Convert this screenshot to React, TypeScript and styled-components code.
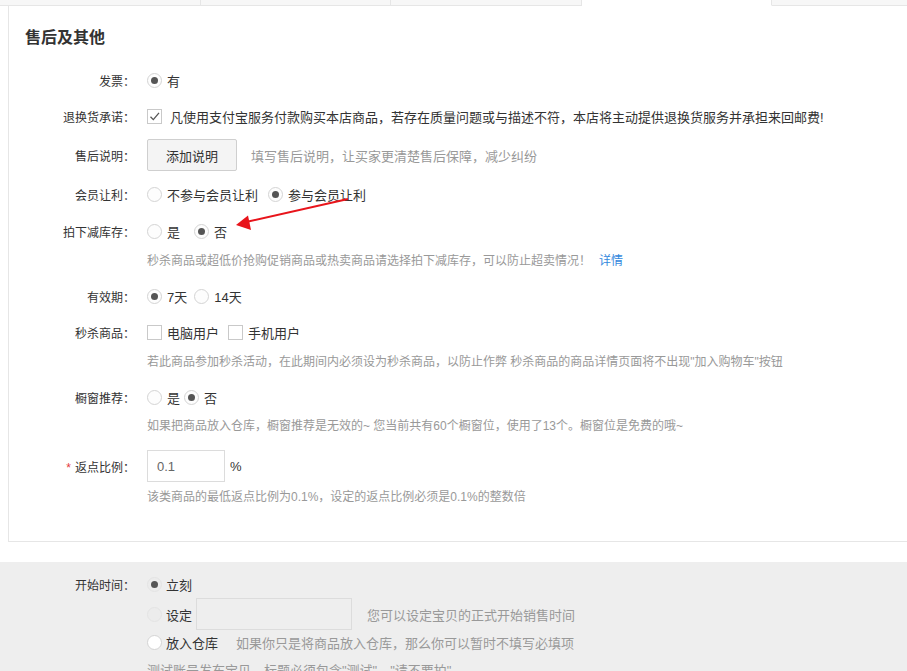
import React from "react";
import styled, { createGlobalStyle } from "styled-components";

const GlobalStyle = createGlobalStyle`
  html, body { margin: 0; padding: 0; background: #fff; overflow: hidden; }
  body {
    font-family: "Liberation Sans", "Noto Sans CJK SC", sans-serif;
    color: #333;
    font-size: 12px;
  }
  * { box-sizing: border-box; }
`;

const Page = styled.div`
  position: relative;
  width: 907px;
  height: 720px;
  overflow: hidden;
`;

const TabBar = styled.div`
  display: flex;
  height: 6px;
`;

const Tab = styled.div<{ $w?: number; $active?: boolean; $last?: boolean }>`
  flex: ${(p) => (p.$w ? `0 0 ${p.$w}px` : "1 1 auto")};
  height: 6px;
  background: ${(p) => (p.$active ? "#fff" : "#f7f7f7")};
  border-bottom: 1px solid ${(p) => (p.$active ? "#fff" : "#e6e6e6")};
  border-right: ${(p) => (p.$last ? "none" : "1px solid #e6e6e6")};
`;

const Panel = styled.section`
  margin-left: 8px;
  border-left: 1px solid #e6e6e6;
  border-bottom: 1px solid #e6e6e6;
  padding-bottom: 34px;
`;

const Title = styled.h2`
  margin: 0;
  padding: 22px 0 0 16px;
  font-size: 16px;
  line-height: 20px;
  font-weight: bold;
  color: #333;
`;

const Field = styled.div<{ $mt: number }>`
  margin-top: ${(p) => p.$mt}px;
`;

const Row = styled.div<{ $h?: number }>`
  display: flex;
  align-items: center;
  height: ${(p) => p.$h ?? 30}px;
`;

const Label = styled.div`
  flex: 0 0 126px;
  margin-right: 12px;
  text-align: right;
  font-size: 12px;
  color: #333;
  white-space: nowrap;
`;

const Star = styled.span`
  color: #e4393c;
  margin-right: 4px;
`;

const Help = styled.div<{ $mt?: number }>`
  margin: ${(p) => p.$mt ?? 5}px 0 0 138px;
  line-height: 20px;
  font-size: 12px;
  color: #999;
  white-space: nowrap;
`;

const Link = styled.a`
  color: #3388dd;
  text-decoration: none;
  margin-left: 8px;
`;

const Option = styled.label<{ $mr?: number }>`
  display: inline-flex;
  align-items: center;
  margin-right: ${(p) => p.$mr ?? 0}px;
  white-space: nowrap;
`;

const OptionText = styled.span<{ $ml?: number }>`
  margin-left: ${(p) => p.$ml ?? 5}px;
  font-size: 13px;
  color: #333;
`;

const Radio = styled.span<{ $checked?: boolean; $variant?: "normal" | "dim" | "white" }>`
  width: 15px;
  height: 15px;
  border-radius: 50%;
  border: 1px solid ${(p) => (p.$variant === "dim" ? "#e4e4e4" : "#d4d4d4")};
  background: ${(p) =>
    p.$variant === "dim" ? "#ececec" : p.$variant === "white" ? "#fff" : "#fdfdfd"};
  display: inline-flex;
  align-items: center;
  justify-content: center;
  flex-shrink: 0;
  &::after {
    content: "";
    width: 7px;
    height: 7px;
    border-radius: 50%;
    background: #555;
    display: ${(p) => (p.$checked ? "block" : "none")};
  }
`;

const Box = styled.span`
  width: 15px;
  height: 15px;
  border: 1px solid #c9c9c9;
  background: #fff;
  display: inline-flex;
  align-items: center;
  justify-content: center;
  flex-shrink: 0;
`;

const Button = styled.button`
  width: 90px;
  height: 32px;
  border: 1px solid #cfcfcf;
  border-radius: 2px;
  background: #f4f4f4;
  font-family: inherit;
  font-size: 13px;
  color: #333;
  padding: 0;
`;

const Hint = styled.span<{ $ml?: number }>`
  margin-left: ${(p) => p.$ml ?? 14}px;
  font-size: 13px;
  color: #999;
  white-space: nowrap;
`;

const TextInput = styled.input<{ $w: number; $bg?: string; $ml?: number }>`
  width: ${(p) => p.$w}px;
  height: 32px;
  margin-left: ${(p) => p.$ml ?? 0}px;
  border: 1px solid #dcdcdc;
  background: ${(p) => p.$bg ?? "#fff"};
  padding: 0 0 0 9px;
  font-family: inherit;
  font-size: 13px;
  color: #666;
  outline: none;
`;

const Unit = styled.span`
  margin-left: 5px;
  font-size: 13px;
  color: #333;
`;

const Bottom = styled.section`
  margin-top: 20px;
  background: #eee;
  padding: 8px 0 60px 9px;
`;

const LastLine = styled.div`
  margin: 5px 0 0 138px;
  line-height: 24px;
  font-size: 13px;
  color: #999;
  white-space: nowrap;
`;

const Arrow = styled.svg`
  position: absolute;
  left: 0;
  top: 0;
  pointer-events: none;
`;

const Check = () => (
  <svg width="13" height="13" viewBox="0 0 13 13">
    <path d="M2.5 6.8 L5.3 9.6 L11 2.8" fill="none" stroke="#555" strokeWidth="1.3" />
  </svg>
);

export default function App() {
  return (
    <Page>
      <GlobalStyle />
      <TabBar>
        <Tab $w={201} />
        <Tab $w={190} />
        <Tab $w={191} />
        <Tab $w={190} $active />
        <Tab $last />
      </TabBar>
      <Panel>
        <Title>售后及其他</Title>

        <Field $mt={17}>
          <Row>
            <Label>发票：</Label>
            <Option>
              <Radio $checked />
              <OptionText>有</OptionText>
            </Option>
          </Row>
        </Field>

        <Field $mt={6}>
          <Row>
            <Label>退换货承诺：</Label>
            <Option>
              <Box>
                <Check />
              </Box>
              <OptionText $ml={8}>
                凡使用支付宝服务付款购买本店商品，若存在质量问题或与描述不符，本店将主动提供退换货服务并承担来回邮费!
              </OptionText>
            </Option>
          </Row>
        </Field>

        <Field $mt={8}>
          <Row $h={32}>
            <Label>售后说明：</Label>
            <Button>添加说明</Button>
            <Hint>填写售后说明，让买家更清楚售后保障，减少纠纷</Hint>
          </Row>
        </Field>

        <Field $mt={8}>
          <Row>
            <Label>会员让利：</Label>
            <Option $mr={10}>
              <Radio />
              <OptionText>不参与会员让利</OptionText>
            </Option>
            <Option>
              <Radio $checked />
              <OptionText>参与会员让利</OptionText>
            </Option>
          </Row>
        </Field>

        <Field $mt={7}>
          <Row>
            <Label>拍下减库存：</Label>
            <Option $mr={14}>
              <Radio />
              <OptionText>是</OptionText>
            </Option>
            <Option>
              <Radio $checked />
              <OptionText>否</OptionText>
            </Option>
          </Row>
          <Help>
            秒杀商品或超低价抢购促销商品或热卖商品请选择拍下减库存，可以防止超卖情况！
            <Link href="#">详情</Link>
          </Help>
        </Field>

        <Field $mt={10}>
          <Row>
            <Label>有效期：</Label>
            <Option $mr={7}>
              <Radio $checked />
              <OptionText>7天</OptionText>
            </Option>
            <Option>
              <Radio />
              <OptionText>14天</OptionText>
            </Option>
          </Row>
        </Field>

        <Field $mt={6}>
          <Row>
            <Label>秒杀商品：</Label>
            <Option $mr={9}>
              <Box />
              <OptionText>电脑用户</OptionText>
            </Option>
            <Option>
              <Box />
              <OptionText>手机用户</OptionText>
            </Option>
          </Row>
          <Help>
            若此商品参加秒杀活动，在此期间内必须设为秒杀商品，以防止作弊 秒杀商品的商品详情页面将不出现"加入购物车"按钮
          </Help>
        </Field>

        <Field $mt={10}>
          <Row>
            <Label>橱窗推荐：</Label>
            <Option $mr={4}>
              <Radio />
              <OptionText>是</OptionText>
            </Option>
            <Option>
              <Radio $checked />
              <OptionText>否</OptionText>
            </Option>
          </Row>
          <Help $mt={4}>
            如果把商品放入仓库，橱窗推荐是无效的~ 您当前共有60个橱窗位，使用了13个。橱窗位是免费的哦~
          </Help>
        </Field>

        <Field $mt={14}>
          <Row $h={32}>
            <Label>
              <Star>*</Star>返点比例：
            </Label>
            <TextInput $w={78} defaultValue="0.1" />
            <Unit>%</Unit>
          </Row>
          <Help>该类商品的最低返点比例为0.1%，设定的返点比例必须是0.1%的整数倍</Help>
        </Field>
      </Panel>

      <Bottom>
        <Row $h={28}>
          <Label>开始时间：</Label>
          <Option>
            <Radio $checked $variant="dim" />
            <OptionText $ml={4}>立刻</OptionText>
          </Option>
        </Row>
        <Row $h={32}>
          <Label />
          <Option>
            <Radio $variant="dim" />
            <OptionText $ml={4}>设定</OptionText>
          </Option>
          <TextInput $w={156} $bg="#eee" $ml={4} />
          <Hint $ml={15}>您可以设定宝贝的正式开始销售时间</Hint>
        </Row>
        <Row $h={24}>
          <Label />
          <Option>
            <Radio $variant="white" />
            <OptionText $ml={4}>放入仓库</OptionText>
          </Option>
          <Hint $ml={18}>如果你只是将商品放入仓库，那么你可以暂时不填写必填项</Hint>
        </Row>
        <LastLine>测试账号发布宝贝，标题必须包含"测试"，"请不要拍"</LastLine>
      </Bottom>

      <Arrow width="907" height="671" viewBox="0 0 907 671">
        <line x1="348" y1="199" x2="246" y2="222" stroke="#e8141b" strokeWidth="2" />
        <polygon points="236,225 248,215.5 251,230" fill="#e8141b" />
      </Arrow>
    </Page>
  );
}
